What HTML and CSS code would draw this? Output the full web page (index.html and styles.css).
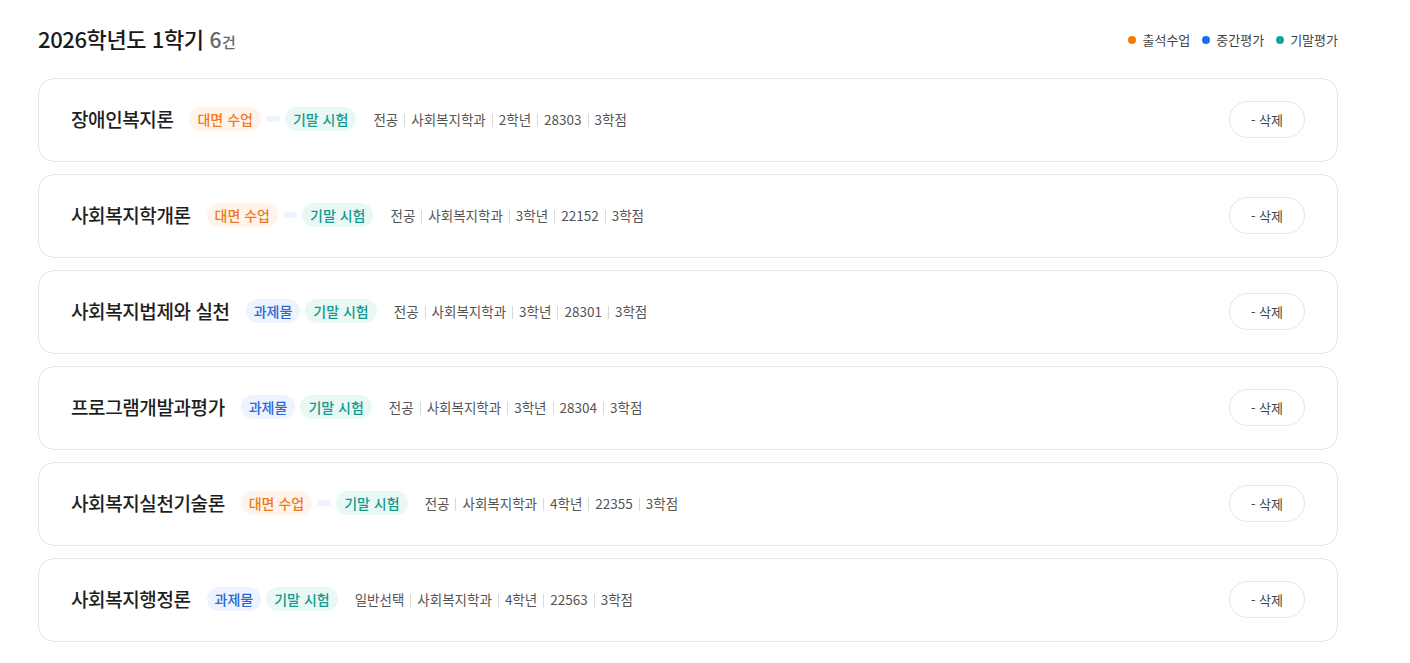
FILE: index.html
```html
<!DOCTYPE html>
<html lang="ko">

<head>
  <meta charset="UTF-8" />
  <meta name="viewport" content="width=device-width, initial-scale=1.0" />
  <title>수강 과목</title>
  <link rel="stylesheet" href="styles.css">
</head>

<body>
  <div class="course-page">
    <div class="course-head">
      <h2 class="term">2026학년도 1학기 <span class="count">6<small>건</small></span></h2>
      <ul class="legend">
        <li><i class="dot orange"></i>출석수업</li>
        <li><i class="dot blue"></i>중간평가</li>
        <li><i class="dot teal"></i>기말평가</li>
      </ul>
    </div>

    <ul class="course-list">
      <li class="course">
        <div class="course-info">
          <h3 class="course-name">장애인복지론</h3>
          <div class="tags">
            <span class="tag orange">대면 수업</span>
            <span class="tag blue"></span>
            <span class="tag teal">기말 시험</span>
          </div>
          <p class="meta"><span>전공</span><span>사회복지학과</span><span>2학년</span><span>28303</span><span>3학점</span></p>
        </div>
        <button class="btn-del">- 삭제</button>
      </li>
      <li class="course">
        <div class="course-info">
          <h3 class="course-name">사회복지학개론</h3>
          <div class="tags">
            <span class="tag orange">대면 수업</span>
            <span class="tag blue"></span>
            <span class="tag teal">기말 시험</span>
          </div>
          <p class="meta"><span>전공</span><span>사회복지학과</span><span>3학년</span><span>22152</span><span>3학점</span></p>
        </div>
        <button class="btn-del">- 삭제</button>
      </li>
      <li class="course">
        <div class="course-info">
          <h3 class="course-name">사회복지법제와 실천</h3>
          <div class="tags">
            <span class="tag blue">과제물</span>
            <span class="tag teal">기말 시험</span>
          </div>
          <p class="meta"><span>전공</span><span>사회복지학과</span><span>3학년</span><span>28301</span><span>3학점</span></p>
        </div>
        <button class="btn-del">- 삭제</button>
      </li>
      <li class="course">
        <div class="course-info">
          <h3 class="course-name">프로그램개발과평가</h3>
          <div class="tags">
            <span class="tag blue">과제물</span>
            <span class="tag teal">기말 시험</span>
          </div>
          <p class="meta"><span>전공</span><span>사회복지학과</span><span>3학년</span><span>28304</span><span>3학점</span></p>
        </div>
        <button class="btn-del">- 삭제</button>
      </li>
      <li class="course">
        <div class="course-info">
          <h3 class="course-name">사회복지실천기술론</h3>
          <div class="tags">
            <span class="tag orange">대면 수업</span>
            <span class="tag blue"></span>
            <span class="tag teal">기말 시험</span>
          </div>
          <p class="meta"><span>전공</span><span>사회복지학과</span><span>4학년</span><span>22355</span><span>3학점</span></p>
        </div>
        <button class="btn-del">- 삭제</button>
      </li>
      <li class="course">
        <div class="course-info">
          <h3 class="course-name">사회복지행정론</h3>
          <div class="tags">
            <span class="tag blue">과제물</span>
            <span class="tag teal">기말 시험</span>
          </div>
          <p class="meta"><span>일반선택</span><span>사회복지학과</span><span>4학년</span><span>22563</span><span>3학점</span></p>
        </div>
        <button class="btn-del">- 삭제</button>
      </li>
    </ul>
  </div>
</body>

</html>
```

FILE: styles.css
```css
* {
  box-sizing: border-box;
}

body {
  margin: 0;
  background: #fff;
  color: #222;
  font-family: "Noto Sans CJK KR", "Noto Sans", sans-serif;
}

.course-page {
  width: 1300px;
  margin-left: 38px;
  padding-top: 26px;
}

.course-head {
  height: 28px;
  margin-bottom: 24px;
  display: flex;
  align-items: center;
  justify-content: space-between;
}

.term {
  margin: 0;
  font-size: 22px;
  font-weight: 500;
  line-height: 28px;
  letter-spacing: -0.4px;
  color: #1a1a1a;
}

.term .count {
  color: #666;
  font-size: 21px;
}

.term .count small {
  font-size: 15px;
  margin-left: 1px;
}

.legend {
  margin: 0;
  padding: 0;
  list-style: none;
  display: flex;
  gap: 12px;
  font-size: 13px;
  line-height: 18px;
  color: #444;
}

.legend li {
  display: flex;
  align-items: center;
}

.dot {
  width: 8px;
  height: 8px;
  border-radius: 50%;
  margin-right: 6px;
}

.dot.orange {
  background: #f57c00;
}

.dot.blue {
  background: #1a6fe8;
}

.dot.teal {
  background: #14a598;
}

.course-list {
  margin: 0;
  padding: 0;
  list-style: none;
  display: flex;
  flex-direction: column;
  gap: 12px;
}

.course {
  height: 84px;
  border: 1px solid #e6e6e6;
  border-radius: 16px;
  padding: 0 32px 2px;
  display: flex;
  align-items: center;
  justify-content: space-between;
}

.course-info {
  display: flex;
  align-items: center;
}

.course-name {
  margin: 0 16px 0 0;
  font-size: 19px;
  font-weight: 500;
  line-height: 26px;
  letter-spacing: -0.4px;
  color: #1e1e1e;
}

.tags {
  display: flex;
  align-items: center;
  gap: 5px;
  margin-right: 17px;
}

.tag {
  padding: 3px 8px;
  border-radius: 12px;
  font-size: 14px;
  font-weight: 500;
  line-height: 18px;
}

.tag:empty {
  padding: 3px 7px;
}

.tag.orange {
  color: #f07a1c;
  background: #fff4eb;
}

.tag.blue {
  color: #2a66d6;
  background: #eef4ff;
}

.tag.teal {
  color: #139a8d;
  background: #eaf8f5;
}

.meta {
  margin: 0;
  display: flex;
  align-items: center;
  font-size: 13.5px;
  line-height: 18px;
  color: #555;
}

.meta span + span::before {
  content: "";
  display: inline-block;
  width: 1px;
  height: 13px;
  margin: 0 6px;
  background: #d8d8d8;
  vertical-align: -2px;
}

.btn-del {
  width: 76px;
  height: 37px;
  border: 1px solid #e6e6e6;
  border-radius: 19px;
  background: #fff;
  font-family: inherit;
  font-size: 13px;
  color: #444;
  cursor: pointer;
}
```
